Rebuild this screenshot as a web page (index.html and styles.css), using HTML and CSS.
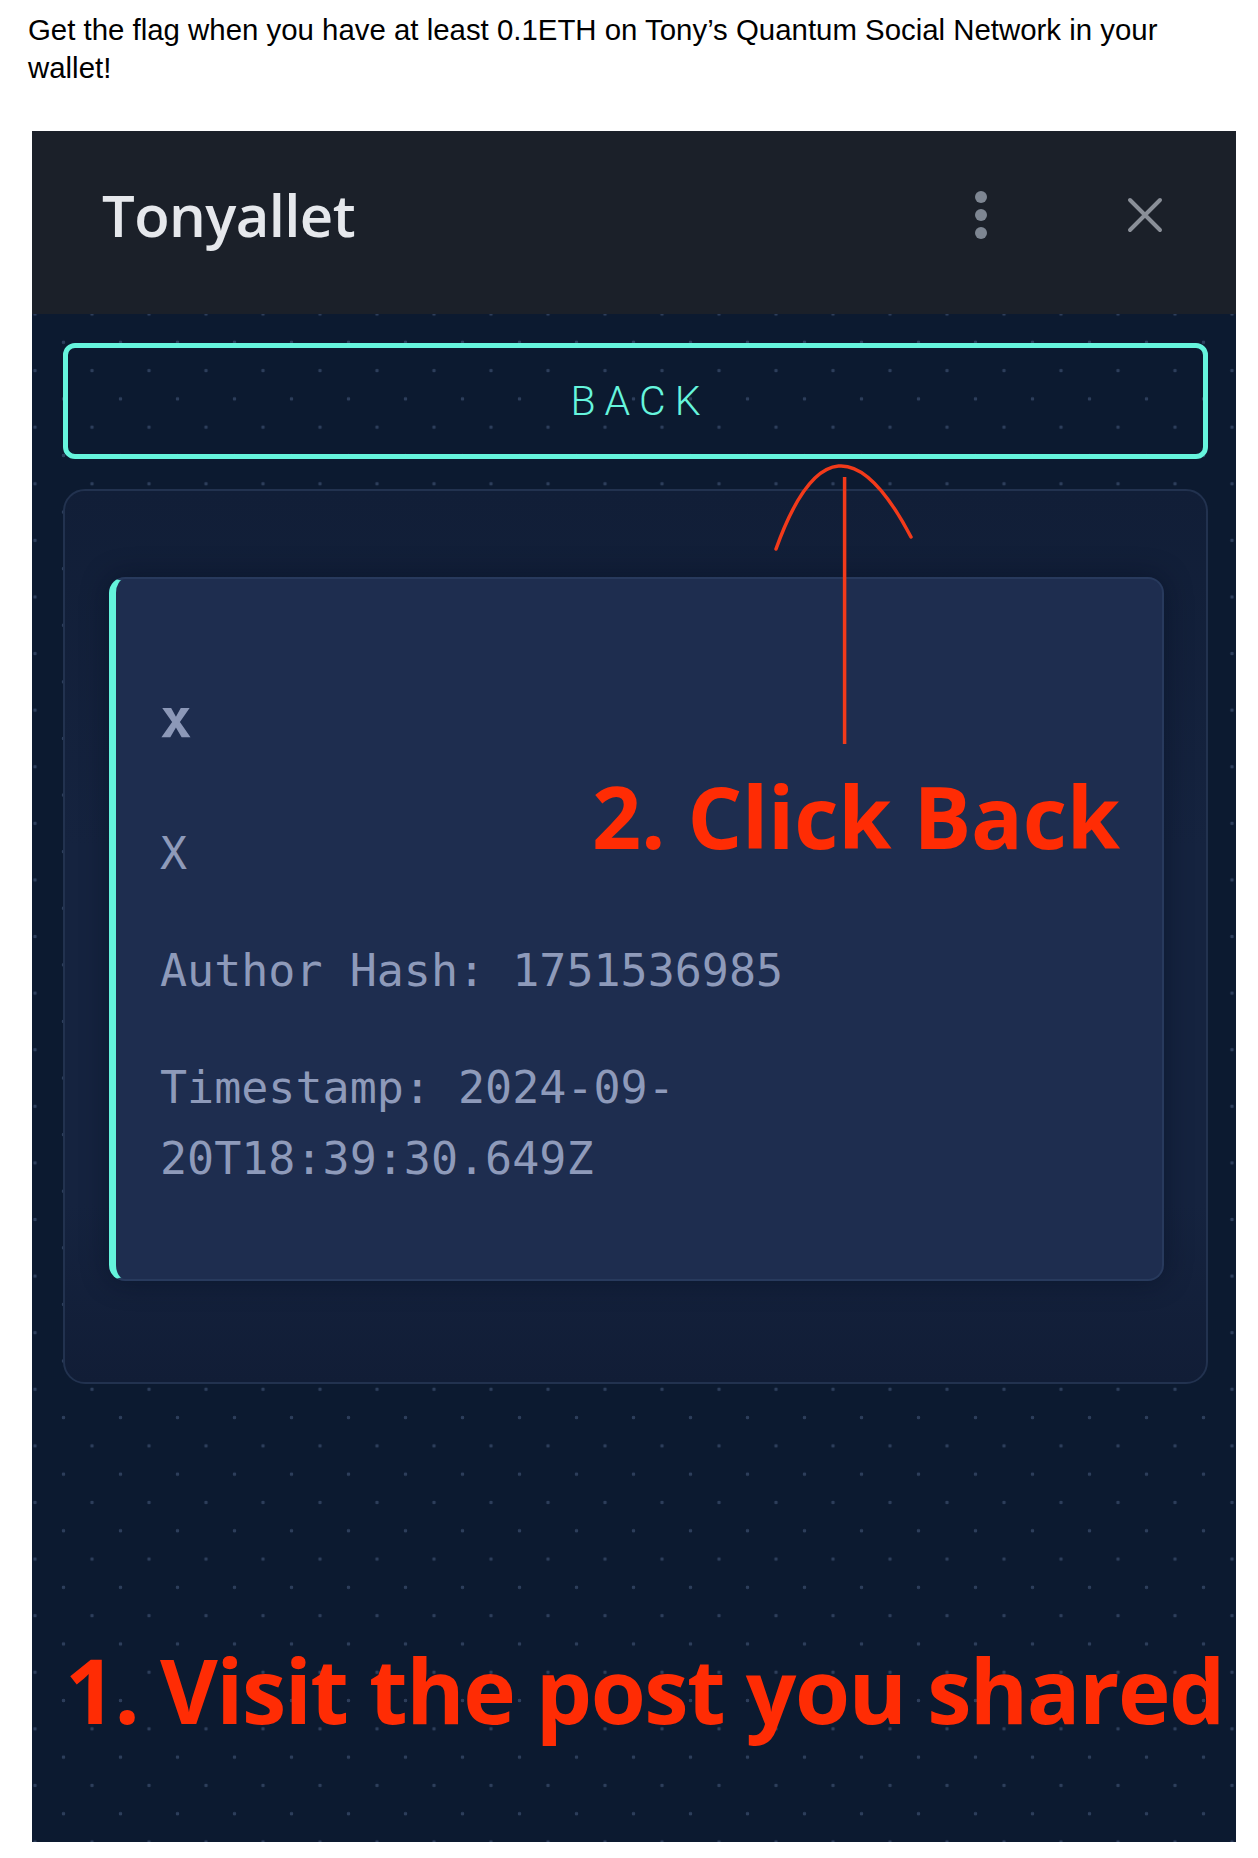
FILE: index.html
```html
<!DOCTYPE html>
<html lang="en">
<head>
<meta charset="utf-8">
<title>Tonyallet</title>
<link rel="stylesheet" href="styles.css">
</head>
<body>
<p class="intro">Get the flag when you have at least 0.1ETH on Tony’s Quantum Social Network in your wallet!</p>
<div class="panel">
  <header class="wallet-header">
    <h1 class="wallet-title">Tonyallet</h1>
    <div class="kebab" aria-label="menu"><span></span><span></span><span></span></div>
    <svg class="close" viewBox="0 0 36 36" width="36" height="36" aria-label="close">
      <path d="M3 3 L33 33 M33 3 L3 33" stroke="#8a8f98" stroke-width="4" stroke-linecap="round" fill="none"/>
    </svg>
  </header>
  <main class="wallet-body">
    <button class="back-btn">BACK</button>
    <section class="post-wrap">
      <article class="post">
        <h3 class="post-title">x</h3>
        <p class="post-line">X</p>
        <p class="post-line">Author Hash: 1751536985</p>
        <p class="post-line">Timestamp: 2024-09-<wbr>20T18:39:30.649Z</p>
      </article>
    </section>
  </main>
  <svg class="arrow" viewBox="0 0 150 290" width="150" height="290">
    <path d="M6 88 Q63.5 -72 141 76" stroke="#f23a1a" stroke-width="3.5" fill="none" stroke-linecap="round"/>
    <path d="M74.6 16 L74.6 283" stroke="#f23a1a" stroke-width="3.5" fill="none"/>
  </svg>
  <div class="note note-2">2. Click Back</div>
  <div class="note note-1">1. Visit the post you shared</div>
</div>
</body>
</html>
```

FILE: styles.css
```css
html, body {
  margin: 0;
  padding: 0;
  background: #ffffff;
}

.intro {
  margin: 0 0 45px 0;
  padding: 11px 0 0 28px;
  width: 1170px;
  font-family: "Liberation Sans", Arial, sans-serif;
  font-size: 29.4px;
  line-height: 37.7px;
  color: #000;
}

.panel {
  position: relative;
  margin-left: 32px;
  width: 1204px;
  height: 1711px;
  display: flex;
  flex-direction: column;
  overflow: hidden;
  background: #0c1a30;
}

.wallet-header {
  height: 183px;
  flex: none;
  box-sizing: border-box;
  display: flex;
  align-items: center;
  padding: 0 73px 15px 70px;
  background: #1b2029;
}

.wallet-title {
  margin: 0;
  font-family: "Open Sans", "Noto Sans", sans-serif;
  font-weight: 600;
  font-size: 58px;
  line-height: 1;
  color: #e6e8ec;
  letter-spacing: -0.6px;
}

.kebab {
  margin-left: auto;
  display: flex;
  flex-direction: column;
  gap: 6px;
}

.kebab span {
  width: 12px;
  height: 12px;
  border-radius: 50%;
  background: #7e8692;
}

.close {
  margin-left: 140px;
  display: block;
}

.wallet-body {
  flex: 1;
  display: flex;
  flex-direction: column;
  padding: 29px 28px 0 31px;
  background-color: #0c1a30;
  background-image:
    radial-gradient(circle, #2d3e5b 1.5px, transparent 2.1px),
    radial-gradient(circle, #2d3e5b 1.5px, transparent 2.1px);
  background-size: 57px 56.6px, 57px 56.6px;
  background-position: -25.5px -28.3px, 3px 0px;
}

.back-btn {
  height: 116px;
  flex: none;
  box-sizing: border-box;
  border: 5px solid #66f5dd;
  border-radius: 12px;
  background: transparent;
  color: #66f5dd;
  font-family: "Roboto", "DejaVu Sans", sans-serif;
  font-weight: 300;
  font-size: 41px;
  letter-spacing: 9px;
  padding: 0 0 0 9px;
  cursor: pointer;
}

.post-wrap {
  margin-top: 30px;
  border: 2px solid #22324f;
  border-radius: 22px;
  padding: 86px 42px 101px 44px;
  background: linear-gradient(180deg, #111e37 0%, #15233f 40%, #15233f 80%, #111d36 100%);
}

.post {
  border: 2px solid #283a5d;
  border-left: 7px solid #64f4dc;
  border-radius: 16px;
  background: #1e2d4f;
  padding: 110px 100px 85px 44px;
  box-shadow: 0 0 28px rgba(5, 12, 28, 0.45);
}

.post-title {
  margin: 0 0 69px 0;
  font-family: "DejaVu Sans Mono", monospace;
  font-weight: 700;
  font-size: 53px;
  line-height: 60px;
  color: #8c98b8;
}

.post-line {
  margin: 0 0 46px 0;
  font-family: "DejaVu Sans Mono", monospace;
  font-size: 45px;
  line-height: 71px;
  color: #8e9aba;
}

.post-line:last-child {
  margin-bottom: 0;
}

.arrow {
  position: absolute;
  left: 738px;
  top: 330px;
  overflow: visible;
}

.note {
  position: absolute;
  font-family: "Open Sans", "Noto Sans", sans-serif;
  font-weight: 700;
  line-height: 1;
  color: #ff2c04;
  white-space: nowrap;
}

.note-2 {
  left: 560px;
  top: 642px;
  font-size: 86px;
  letter-spacing: -0.2px;
}

.note-1 {
  left: 33px;
  top: 1514px;
  font-size: 89px;
  letter-spacing: -1.5px;
}
```
